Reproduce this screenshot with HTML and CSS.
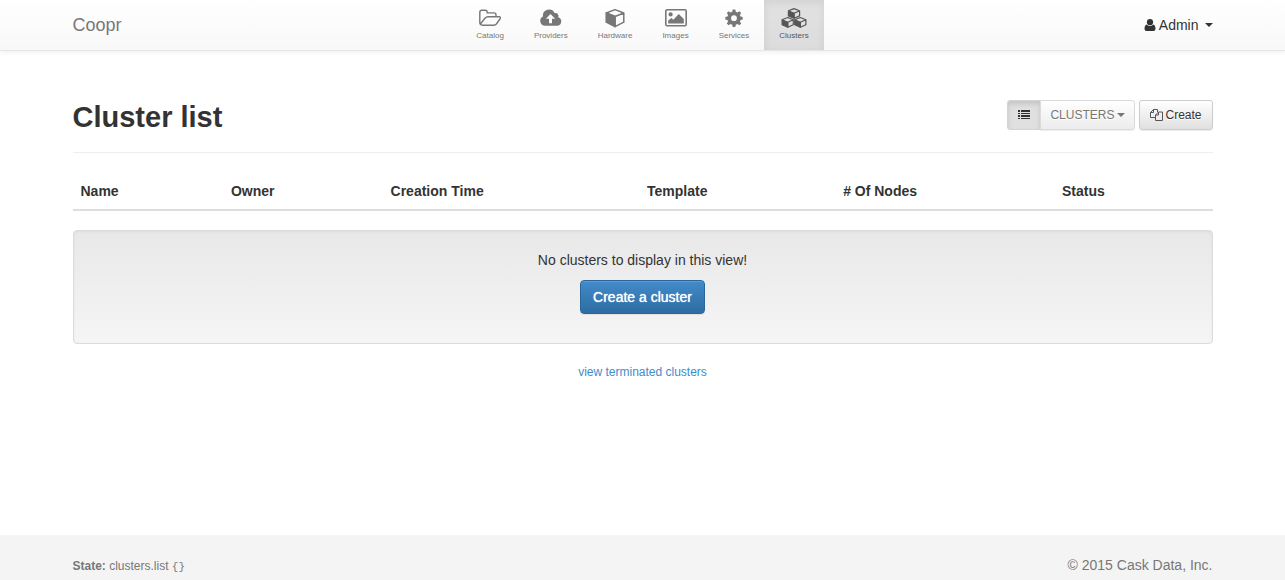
FILE: index.html
```html
<!DOCTYPE html>
<html lang="en">
<head>
<meta charset="utf-8">
<title>Coopr - Cluster list</title>
<link rel="stylesheet" href="styles.css">
</head>
<body>
<header class="navbar">
  <div class="container navbar-inner">
    <a class="brand" href="#">Coopr</a>
    <nav class="nav" aria-label="Main">
      <a class="nav-item" href="#">
        <svg class="nav-icon" viewBox="0 0 26 20" fill="none" stroke="currentColor" stroke-width="1.4" stroke-linejoin="round"><path d="M5.400 17.200Q2.800 17.200 2.800 14.800V4.400Q2.800 2.300 4.800 2.300H8.200Q10.200 2.300 10.200 4.300V4.900H17Q19 4.900 19 6.900V8.600M5.400 17.200H16.700Q18.400 17.200 19.400 16L23 11Q24.200 8.700 21.900 8.700H11Q9.200 8.700 8 10.200L3.200 16.200"/></svg>
        <span>Catalog</span>
      </a>
      <a class="nav-item" href="#">
        <svg class="nav-icon" viewBox="0 0 26 20" fill="currentColor"><path fill-rule="evenodd" d="M7.200 17.800A5 5 0 0 1 4.900 8.400A6.200 6.200 0 0 1 16.600 5A3.200 3.200 0 0 1 20.300 9.300A4.400 4.400 0 0 1 19.500 17.800ZM12.500 5.900L7.900 10.700H11V15.200H14V10.700H17.100Z"/></svg>
        <span>Providers</span>
      </a>
      <a class="nav-item" href="#">
        <svg class="nav-icon" viewBox="0 0 26 20" fill="currentColor" stroke="currentColor" stroke-width="1.5" stroke-linejoin="round"><path fill="none" d="M13 1.600L21.800 5L13 8.500L4.200 5ZM21.800 5V14.200L13 18.700V8.500"/><path d="M4.200 5L13 8.500V18.700L4.200 14.200Z"/></svg>
        <span>Hardware</span>
      </a>
      <a class="nav-item" href="#">
        <svg class="nav-icon" viewBox="0 0 26 20" fill="currentColor"><rect x="2.800" y="1.800" width="20.400" height="16" rx="1.300" fill="none" stroke="currentColor" stroke-width="1.600"/><circle cx="7.600" cy="6.400" r="2.100"/><path d="M5.200 15.600V12.400L8.400 9.900L10.300 11.800L15.800 6L20.800 11V15.600Z"/></svg>
        <span>Images</span>
      </a>
      <a class="nav-item" href="#">
        <svg class="nav-icon" viewBox="0 0 26 20" fill="currentColor"><path fill-rule="evenodd" d="M11.700 1.500H14.300L14.800 3.800L16.500 4.500L18.400 3.200L20.200 5L18.900 6.900L19.600 8.600L21.700 9V11.500L19.600 11.900L18.900 13.600L20.200 15.500L18.400 17.300L16.500 16L14.800 16.700L14.300 19H11.700L11.200 16.700L9.500 16L7.600 17.300L5.800 15.500L7.100 13.600L6.400 11.900L4.300 11.500V9L6.400 8.600L7.100 6.900L5.800 5L7.600 3.200L9.500 4.500L11.200 3.800ZM13 7.300A2.900 2.900 0 1 0 13 13.100A2.900 2.900 0 1 0 13 7.300Z"/></svg>
        <span>Services</span>
      </a>
      <a class="nav-item active" href="#" aria-current="page">
        <svg class="nav-icon" viewBox="0 0 26 20" fill="currentColor" stroke="currentColor" stroke-width="1.200" stroke-linejoin="round">
          <defs><g id="cube"><path fill="none" d="M0-4.700L5.600-2.500V2.600L0 5V0L5.600-2.500M0-4.700L-5.600-2.500"/><path d="M-5.600-2.500L0 0V5L-5.600 2.600Z"/></g></defs>
          <use href="#cube" x="13" y="5.300"/><use href="#cube" x="6.700" y="14.200"/><use href="#cube" x="19.300" y="14.200"/>
        </svg>
        <span>Clusters</span>
      </a>
    </nav>
    <button class="user-menu" type="button" aria-haspopup="true">
      <svg class="user-icon" viewBox="0 0 12 12" fill="currentColor"><circle cx="6" cy="3.200" r="3.100"/><path d="M2.700 5.400Q6 8.400 9.300 5.400Q11.500 6 11.500 9.800Q11.500 12 9.500 12H2.500Q.5 12 .5 9.800Q.5 6 2.700 5.400Z"/></svg>
      Admin
      <span class="caret"></span>
    </button>
  </div>
</header>

<main class="container main">
  <div class="page-header">
    <h1 class="title">Cluster list</h1>
    <div class="toolbar">
      <div class="button-group">
        <button class="button button-pressed" type="button" aria-label="List view" aria-pressed="true">
          <svg class="button-icon" viewBox="0 0 12 12" fill="currentColor"><path d="M0 1h2v2H0zM3 1h9v2H3zM0 4h2v1H0zM3 4h9v1H3zM0 6h2v2H0zM3 6h9v2H3zM0 9h2v1H0zM3 9h9v1H3z"/></svg>
        </button>
        <button class="button button-muted" type="button" aria-haspopup="true">CLUSTERS<span class="caret"></span></button>
      </div>
      <a class="button" href="#">
        <svg class="copy-icon" viewBox="0 0 13 12" fill="none" stroke="currentColor" stroke-linejoin="round"><path d="M5.500 8.500H.5V3.500L3.500.5H7.500V3M.5 3.500H3.500V.5M5.500 11.500V6L8.500 3H12.500V11.500ZM5.500 6H8.500V3"/></svg>
        Create
      </a>
    </div>
  </div>

  <table class="table">
    <colgroup><col class="col-name"><col class="col-owner"><col class="col-time"><col class="col-template"><col class="col-nodes"><col class="col-status"></colgroup>
    <thead>
      <tr><th scope="col">Name</th><th scope="col">Owner</th><th scope="col">Creation Time</th><th scope="col">Template</th><th scope="col"># Of Nodes</th><th scope="col">Status</th></tr>
    </thead>
  </table>

  <section class="well">
    <p class="well-text">No clusters to display in this view!</p>
    <a class="button button-primary" href="#">Create a cluster</a>
  </section>

  <p class="more"><a class="link" href="#">view terminated clusters</a></p>
</main>

<footer class="footer">
  <div class="container footer-inner">
    <div class="state"><strong>State:</strong> clusters.list <code class="params">{}</code></div>
    <div class="copyright">© 2015 Cask Data, Inc.</div>
  </div>
</footer>
</body>
</html>
```

FILE: styles.css
```css
* { box-sizing: border-box; }

body {
  margin: 0;
  min-height: 100vh;
  display: flex;
  flex-direction: column;
  background: #fff;
  color: #333;
  font: 14px/20px "Liberation Sans", Arial, sans-serif;
}

a { color: inherit; text-decoration: none; }

.container {
  width: 100%;
  max-width: 1170px;
  margin: 0 auto;
  padding: 0 15px;
}

.navbar {
  background: linear-gradient(#fff, #f8f8f8);
  border-bottom: 1px solid #e7e7e7;
  box-shadow: 0 1px 5px rgba(0, 0, 0, .075);
}

.navbar-inner {
  display: grid;
  grid-template-columns: 1fr auto 1fr;
  align-items: center;
}

.brand { color: #777; font-size: 18px; }

.nav { display: flex; }

.nav-item {
  height: 50px;
  padding: 8px 15px 0;
  display: flex;
  flex-direction: column;
  align-items: center;
  gap: 1px;
  color: #777;
  font-size: 8px;
  line-height: 14px;
}

.nav-icon { width: 26px; height: 20px; margin: 0 -3px; }

.nav-item.active {
  color: #555;
  background: linear-gradient(#e2e2e2, #dcdcdc);
  box-shadow: inset 0 3px 9px rgba(0, 0, 0, .075);
}

.user-menu {
  justify-self: end;
  display: flex;
  align-items: center;
  padding: 0;
  border: 0;
  background: none;
  color: #333;
  font: inherit;
}

.user-icon { width: 12px; height: 12px; margin-right: 3px; }

.caret {
  margin-left: 6px;
  border: 4px solid transparent;
  border-top-color: currentColor;
  border-bottom: 0;
}

.main { flex: 1; }

.page-header {
  display: flex;
  justify-content: space-between;
  align-items: flex-start;
  margin-top: 49px;
  padding-bottom: 18px;
  border-bottom: 1px solid #eee;
}

.title { margin: 0; font-size: 29px; line-height: 34px; }

.toolbar { display: flex; gap: 4px; }

.button-group { display: flex; }

.button {
  display: inline-flex;
  align-items: center;
  justify-content: center;
  height: 30px;
  padding: 0 10px;
  border: 1px solid #ccc;
  border-radius: 3px;
  background: linear-gradient(#fff, #e0e0e0);
  box-shadow: inset 0 1px 0 rgba(255, 255, 255, .15), 0 1px 1px rgba(0, 0, 0, .075);
  color: #333;
  font: 12px/18px "Liberation Sans", Arial, sans-serif;
  text-shadow: 0 1px 0 #fff;
}

.button-pressed {
  border-color: #d4d4d4;
  border-radius: 3px 0 0 3px;
  background: #e0e0e0;
  box-shadow: inset 0 3px 5px rgba(0, 0, 0, .125);
}

.button-muted {
  margin-left: -1px;
  padding: 0 9px;
  border-color: #dbdbdb;
  border-radius: 0 3px 3px 0;
  background: linear-gradient(#fff, #ececec);
  color: #777;
}

.button-muted .caret { margin-left: 3px; }

.button-icon { width: 12px; height: 12px; }

.copy-icon { width: 13px; height: 12px; margin-right: 2px; color: #555; }

.table {
  width: 100%;
  margin: 20px 0 19px;
  border-collapse: collapse;
  table-layout: fixed;
}

.table th {
  padding: 8px;
  border-bottom: 2px solid #ddd;
  text-align: left;
}

.col-name { width: 13.2%; }
.col-owner { width: 14%; }
.col-time { width: 22.5%; }
.col-template { width: 17.2%; }
.col-nodes { width: 19.2%; }
.col-status { width: 13.9%; }

.well {
  padding: 19px 19px 29px;
  border: 1px solid #dcdcdc;
  border-radius: 4px;
  background: linear-gradient(#e8e8e8, #f5f5f5);
  box-shadow: inset 0 1px 3px rgba(0, 0, 0, .05), 0 1px 0 rgba(255, 255, 255, .1);
  text-align: center;
}

.well-text { margin: 0 0 10px; }

.button-primary {
  height: 34px;
  padding: 0 12px;
  border-color: #2b669a;
  border-radius: 4px;
  background: linear-gradient(#428bca, #2d6ca2);
  color: #fff;
  font-size: 14px;
  text-shadow: 0 0 1px #fff;
}

.more { margin: 18px 0; text-align: center; font-size: 12px; }

.link { color: #428bca; }

.footer { background: #f4f4f4; color: #777; }

.footer-inner {
  display: flex;
  justify-content: space-between;
  padding-top: 20px;
  padding-bottom: 3px;
}

.state { font-size: 12px; line-height: 22px; }

.params { font: 11px/20px "Liberation Mono", monospace; }
```
